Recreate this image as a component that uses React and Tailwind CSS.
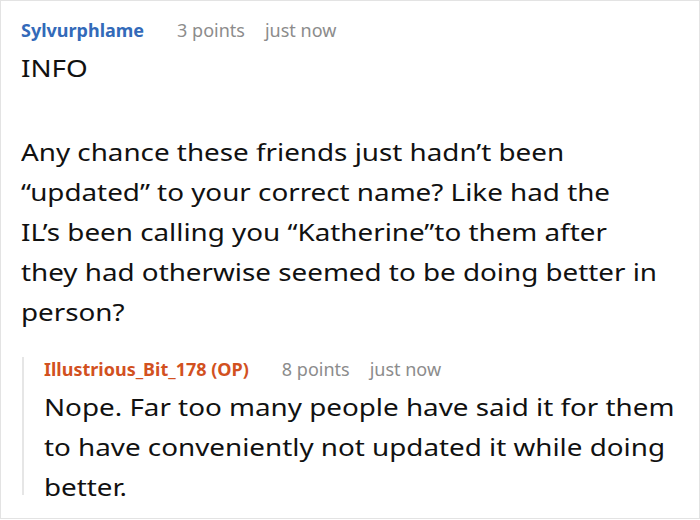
export default function App() {
  return (
    <div
      className="w-[700px] h-[519px] border border-[#e3e3e3] bg-white overflow-hidden"
      style={{ fontFamily: '"Noto Sans", sans-serif' }}
    >
      <div className="pl-[20px] pt-[16px]">
        {/* Comentario principal */}
        <div className="flex items-baseline text-[18px] leading-[26px]">
          <span className="font-bold text-[#336ab9] mr-[33px]">Sylvurphlame</span>
          <span className="text-[#8c8c8c] mr-[20px]">3 points</span>
          <span className="text-[#8c8c8c]">just now</span>
        </div>
        <div className="mt-[5px] text-[24px] leading-[40px] text-[#111] whitespace-nowrap origin-left scale-x-[1.158]">
          <p>INFO</p>
          <p className="mt-[44px]">
            <span className="block">Any chance these friends just hadn’t been</span>
            <span className="block">“updated” to your correct name? Like had the</span>
            <span className="block">IL’s been calling you “Katherine”to them after</span>
            <span className="block">they had otherwise seemed to be doing better in</span>
            <span className="block">person?</span>
          </p>
        </div>

        {/* Respuesta */}
        <div className="mt-[25px] ml-[1px] h-[138px] border-l-2 border-[#e6e6e6] pl-[20px]">
          <div className="flex items-baseline text-[18px] leading-[24px]">
            <span className="font-bold text-[#d2511f] mr-[33px]">Illustrious_Bit_178 (OP)</span>
            <span className="text-[#8c8c8c] mr-[20px]">8 points</span>
            <span className="text-[#8c8c8c]">just now</span>
          </div>
          <p className="mt-[6px] text-[24px] leading-[40px] text-[#111] whitespace-nowrap origin-left scale-x-[1.158]">
            <span className="block">Nope. Far too many people have said it for them</span>
            <span className="block">to have conveniently not updated it while doing</span>
            <span className="block">better.</span>
          </p>
        </div>
      </div>
    </div>
  );
}
